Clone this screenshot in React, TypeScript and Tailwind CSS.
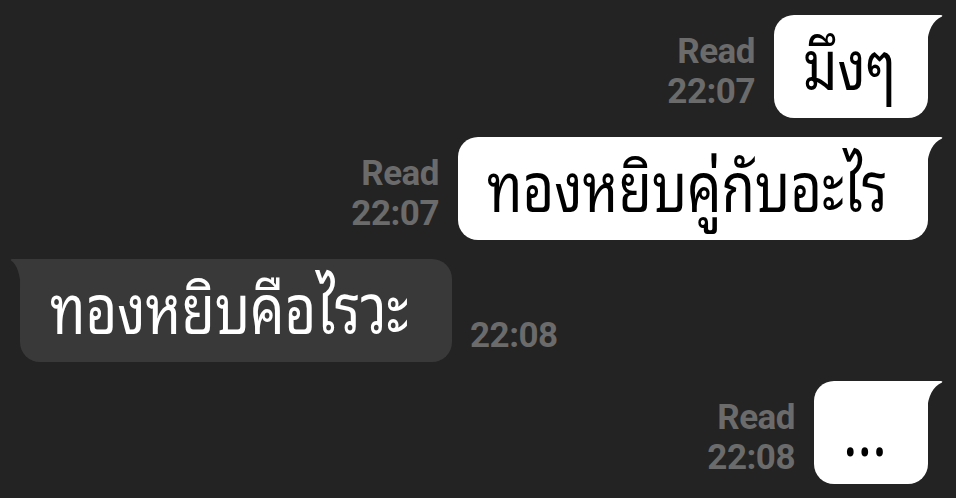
import React from "react";

function OutTail() {
  return (
    <svg className="absolute top-0 right-[-15px]" width="16" height="30" viewBox="0 0 16 30">
      <path d="M0 0 L14 0 Q16 0 15 1.5 C6 6 1 14 0 30 Z" fill="#ffffff" />
    </svg>
  );
}

function InTail() {
  return (
    <svg className="absolute top-0 left-[-10px]" width="11" height="30" viewBox="0 0 11 30">
      <path d="M11 0 L2 0 Q0 0 1 1.5 C7 6 10 14 11 30 Z" fill="#393939" />
    </svg>
  );
}

function Label({ read, time }: { read?: boolean; time: string }) {
  return (
    <div className="flex flex-col items-end text-[35px] leading-[40px] font-bold text-[#6b6b6b] tracking-[-0.5px] font-['Roboto','Liberation_Sans',sans-serif]">
      {read && <span>Read</span>}
      <span>{time}</span>
    </div>
  );
}

function ThaiText({ children }: { children: React.ReactNode }) {
  return (
    <span className="inline-block origin-left scale-x-80 text-[68px] leading-none whitespace-nowrap font-['Noto_Sans_Thai_Looped','Noto_Sans',sans-serif]">
      {children}
    </span>
  );
}

function OutRow({ text, widthClass, time }: { text: string; widthClass: string; time: string }) {
  return (
    <div className="flex justify-end items-end pr-[28px]">
      <div className="mb-[6px] mr-[19px]">
        <Label read time={time} />
      </div>
      <div
        className={
          "relative h-[103px] bg-white rounded-[20px] rounded-tr-none flex items-center pl-[29px] pb-[14px] text-black " +
          widthClass
        }
      >
        <ThaiText>{text}</ThaiText>
        <OutTail />
      </div>
    </div>
  );
}

export default function App() {
  return (
    <div className="w-[956px] h-[498px] bg-[#232323] overflow-hidden flex flex-col gap-[19px] pt-[15px]">
      <OutRow text="มึงๆ" widthClass="w-[154px]" time="22:07" />
      <OutRow text="ทองหยิบคู่กับอะไร" widthClass="w-[470px]" time="22:07" />
      <div className="flex items-end pl-[20px]">
        <div className="relative h-[103px] w-[432px] bg-[#393939] rounded-[20px] rounded-tl-none flex items-center pl-[30px] pb-[14px] text-white">
          <ThaiText>ทองหยิบคือไรวะ</ThaiText>
          <InTail />
        </div>
        <div className="mb-[6px] ml-[18px]">
          <Label time="22:08" />
        </div>
      </div>
      <OutRow text="..." widthClass="w-[114px]" time="22:08" />
    </div>
  );
}
